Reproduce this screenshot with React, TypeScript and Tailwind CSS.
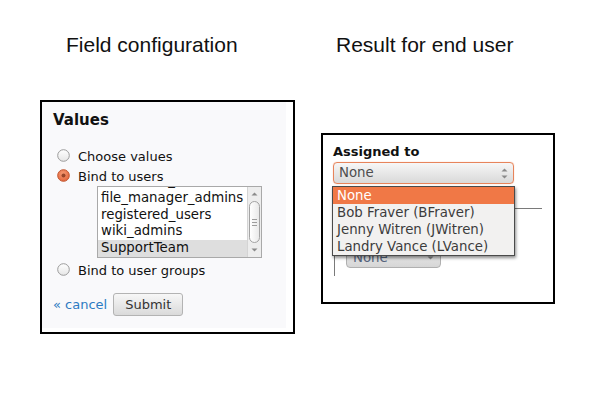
import React from "react";

const form = { fontFamily: '"DejaVu Sans", Verdana, sans-serif' };

function Radio({ checked }: { checked?: boolean }) {
  return (
    <svg width="13" height="13" viewBox="0 0 13 13" className="shrink-0 mt-[2px]">
      <defs>
        <linearGradient id="rOff" x1="0" y1="0" x2="0" y2="1">
          <stop offset="0" stopColor="#ffffff" />
          <stop offset="1" stopColor="#e6e6e6" />
        </linearGradient>
        <radialGradient id="rOn" cx="0.45" cy="0.35" r="0.7">
          <stop offset="0" stopColor="#f59a73" />
          <stop offset="1" stopColor="#e2643a" />
        </radialGradient>
      </defs>
      {checked ? (
        <>
          <circle cx="6.5" cy="6.5" r="5.8" fill="url(#rOn)" stroke="#c0532c" strokeWidth="1" />
          <circle cx="6.5" cy="6.5" r="2" fill="#7a2d15" opacity="0.75" />
        </>
      ) : (
        <circle cx="6.5" cy="6.5" r="5.8" fill="url(#rOff)" stroke="#9b9b9b" strokeWidth="1" />
      )}
    </svg>
  );
}

function Caret({ up }: { up?: boolean }) {
  return (
    <svg width="7" height="4" viewBox="0 0 7 4">
      <path d={up ? "M0.5 3.5 L3.5 0.5 L6.5 3.5 Z" : "M0.5 0.5 L3.5 3.5 L6.5 0.5 Z"} fill="#8a8a8a" />
    </svg>
  );
}

function FieldConfig() {
  const users = ["document_admins", "file_manager_admins", "registered_users", "wiki_admins", "SupportTeam"];

  return (
    <div className="w-[255px] h-[234px] border-2 border-black bg-white pr-[7px] pb-[4px]">
      <div className="h-full bg-[#f9f9fb] pl-[11px] pt-[9px] text-[#111]" style={form}>
        <div className="text-[15px] leading-[18px] font-bold">Values</div>

        <div className="mt-[18px] text-[13px] leading-[20px]">
          <label className="flex gap-[8px] pl-[4px]">
            <Radio />
            <span>Choose values</span>
          </label>
          <label className="flex gap-[8px] pl-[4px]">
            <Radio checked />
            <span>Bind to users</span>
          </label>

          {/* users listbox, scrolled a little */}
          <div className="ml-[44px] -mt-px w-[165px] h-[72px] border border-[#a9a9a9] bg-white flex overflow-hidden">
            <div className="flex-1 overflow-hidden">
              <div className="-mt-[13.7px] text-[13.33px] leading-[16.67px]">
                {users.map((u) => (
                  <div key={u} className={`pl-[3px] ${u === "SupportTeam" ? "bg-[#dedede]" : ""}`}>
                    {u}
                  </div>
                ))}
              </div>
            </div>
            <div className="w-[14px] flex flex-col bg-[#ededed] border-l border-[#d4d4d4]">
              <div className="h-[14px] flex items-center justify-center">
                <Caret up />
              </div>
              <div className="h-[42px] mx-px rounded-[6px] border border-[#a3a3a3] bg-gradient-to-r from-white to-[#e9e9e9] flex flex-col items-center justify-center gap-[2px]">
                <div className="w-[5px] h-px bg-[#9c9c9c]" />
                <div className="w-[5px] h-px bg-[#9c9c9c]" />
                <div className="w-[5px] h-px bg-[#9c9c9c]" />
              </div>
              <div className="flex-1 flex items-center justify-center">
                <Caret />
              </div>
            </div>
          </div>

          <label className="flex gap-[8px] pl-[4px] mt-[2.5px]">
            <Radio />
            <span>Bind to user groups</span>
          </label>
        </div>

        <div className="mt-[12.5px] flex items-center gap-[6px] text-[13px]">
          <a className="text-[#2d7bc2]">« cancel</a>
          <button className="h-[23px] px-[11px] rounded-[3px] border border-[#b3b3b3] bg-gradient-to-b from-[#f7f7f7] to-[#dadada] text-[#333] leading-none">
            Submit
          </button>
        </div>
      </div>
    </div>
  );
}

function EndUser() {
  const people = ["None", "Bob Fraver (BFraver)", "Jenny Witren (JWitren)", "Landry Vance (LVance)"];

  return (
    <div className="relative w-[234px] h-[171px] border-2 border-black bg-white pl-[10px] pt-[9px] text-[#111]" style={form}>
      <div className="text-[13px] leading-[16px] font-bold">Assigned to</div>

      <div className="mt-[2px] w-[181px] h-[22px] rounded-[4px] border border-[#e7845b] shadow-[0_0_1px_#f2a482] bg-gradient-to-b from-[#f7f7f7] to-[#d9d9d9] flex items-center justify-between pl-[5px] pr-[5px]">
        <span className="text-[13.33px] text-[#4d4d4d]">None</span>
        <div className="flex flex-col gap-[3px]">
          <Caret up />
          <Caret />
        </div>
      </div>

      {/* page content hidden behind the open list */}
      <div className="mt-[24px] ml-px w-[208px] h-[68px] border-t border-l border-[#7a7a7a] pl-[11px] pt-[39px]">
        <div className="w-[95px] h-[20px] rounded-b-[4px] border border-[#b0b0b0] bg-gradient-to-b from-[#ededed] to-[#d6d6d6] flex items-center justify-between pl-[6px] pr-[6px]">
          <span className="text-[13.33px] text-[#55647c]">None</span>
          <Caret />
        </div>
      </div>

      {/* open dropdown */}
      <div className="absolute left-[9px] top-[51px] w-[183px] border border-[#4a4a4a] bg-[#f2f1f0] shadow-[1px_2px_3px_rgba(0,0,0,0.45)] text-[13.33px] leading-[17px]">
        {people.map((p, i) => (
          <div key={p} className={`pl-[4px] ${i === 0 ? "bg-[#f07846] text-white" : "text-[#3c3c3c]"}`}>
            {p}
          </div>
        ))}
      </div>
    </div>
  );
}

export default function App() {
  return (
    <div className="w-[600px] h-[400px] bg-white flex">
      <div className="w-[321px] shrink-0 pl-[40px] pt-[33px]">
        <div className="pl-[26px] text-[21px] leading-[24px] text-[#111]" style={{ fontFamily: '"Liberation Sans", Arial, sans-serif' }}>
          Field configuration
        </div>
        <div className="mt-[43px]">
          <FieldConfig />
        </div>
      </div>
      <div className="pt-[33px]">
        <div className="pl-[15px] text-[21px] leading-[24px] text-[#111]" style={{ fontFamily: '"Liberation Sans", Arial, sans-serif' }}>
          Result for end user
        </div>
        <div className="mt-[76px]">
          <EndUser />
        </div>
      </div>
    </div>
  );
}
